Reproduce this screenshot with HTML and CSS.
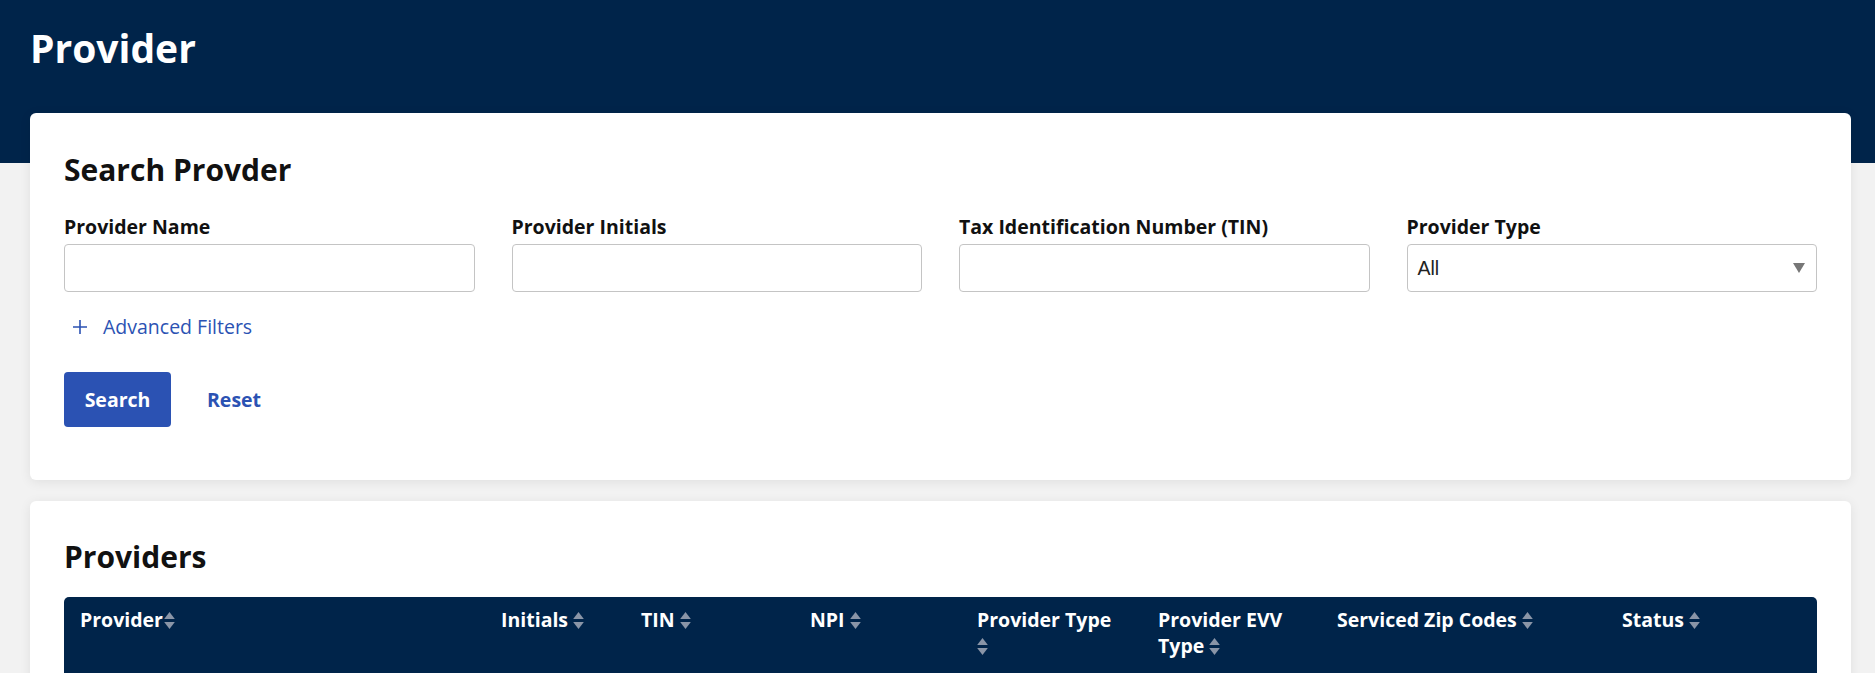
FILE: index.html
```html
<!DOCTYPE html>
<html lang="en">
<head>
<meta charset="utf-8">
<title>Provider</title>
<link rel="stylesheet" href="styles.css">
</head>
<body>
<header class="banner">
  <h1 class="page-title">Provider</h1>
</header>
<main class="content">
  <section class="card search-card">
    <h2 class="card-title">Search Provder</h2>
    <div class="filters">
      <div class="field">
        <label class="field-label" for="pname">Provider Name</label>
        <input class="text-input" id="pname" type="text">
      </div>
      <div class="field">
        <label class="field-label" for="pinit">Provider Initials</label>
        <input class="text-input" id="pinit" type="text">
      </div>
      <div class="field">
        <label class="field-label" for="ptin">Tax Identification Number (TIN)</label>
        <input class="text-input" id="ptin" type="text">
      </div>
      <div class="field">
        <label class="field-label" for="ptype">Provider Type</label>
        <div class="select">
          <span class="select-value">All</span>
          <svg class="select-arrow" viewBox="0 0 12 10" width="12" height="10" aria-hidden="true"><polygon points="0,0 12,0 6,10" fill="#777"/></svg>
        </div>
      </div>
    </div>
    <a class="adv-link" href="#">
      <svg class="plus" viewBox="0 0 16 16" width="16" height="16" aria-hidden="true"><path d="M8 1v14M1 8h14" stroke="#2b52b3" stroke-width="1.6" fill="none"/></svg>
      <span>Advanced Filters</span>
    </a>
    <div class="actions">
      <button class="btn-primary" type="button">Search</button>
      <button class="btn-link" type="button">Reset</button>
    </div>
  </section>

  <section class="card results-card">
    <h2 class="card-title">Providers</h2>
    <table class="grid">
      <colgroup>
        <col class="c-provider"><col class="c-initials"><col class="c-tin"><col class="c-npi"><col class="c-type"><col class="c-evv"><col class="c-zip"><col class="c-status">
      </colgroup>
      <thead>
        <tr>
          <th>Provider<svg class="sort tight" viewBox="0 0 10 16" aria-hidden="true"><polygon points="5,0 10,6.5 0,6.5"/><polygon points="0,9.5 10,9.5 5,16"/></svg></th>
          <th>Initials <svg class="sort" viewBox="0 0 10 16" aria-hidden="true"><polygon points="5,0 10,6.5 0,6.5"/><polygon points="0,9.5 10,9.5 5,16"/></svg></th>
          <th>TIN <svg class="sort" viewBox="0 0 10 16" aria-hidden="true"><polygon points="5,0 10,6.5 0,6.5"/><polygon points="0,9.5 10,9.5 5,16"/></svg></th>
          <th>NPI <svg class="sort" viewBox="0 0 10 16" aria-hidden="true"><polygon points="5,0 10,6.5 0,6.5"/><polygon points="0,9.5 10,9.5 5,16"/></svg></th>
          <th>Provider Type <svg class="sort" viewBox="0 0 10 16" aria-hidden="true"><polygon points="5,0 10,6.5 0,6.5"/><polygon points="0,9.5 10,9.5 5,16"/></svg></th>
          <th>Provider EVV Type <svg class="sort" viewBox="0 0 10 16" aria-hidden="true"><polygon points="5,0 10,6.5 0,6.5"/><polygon points="0,9.5 10,9.5 5,16"/></svg></th>
          <th>Serviced Zip Codes <svg class="sort" viewBox="0 0 10 16" aria-hidden="true"><polygon points="5,0 10,6.5 0,6.5"/><polygon points="0,9.5 10,9.5 5,16"/></svg></th>
          <th>Status <svg class="sort" viewBox="0 0 10 16" aria-hidden="true"><polygon points="5,0 10,6.5 0,6.5"/><polygon points="0,9.5 10,9.5 5,16"/></svg></th>
        </tr>
      </thead>
    </table>
  </section>
</main>
</body>
</html>
```

FILE: styles.css
```css
* { box-sizing: border-box; }

html, body {
  margin: 0;
  padding: 0;
}

body {
  background: #f2f2f2;
  font-family: "Open Sans", "Noto Sans", "Liberation Sans", sans-serif;
  color: #111;
  overflow: hidden;
}

.banner {
  background: #00244a;
  height: 163px;
  padding: 24px 30px 0;
}

.page-title {
  margin: 0;
  color: #fff;
  font-size: 39px;
  line-height: 48px;
  font-weight: 700;
}

.content {
  margin: -50px 24px 0 30px;
  display: flex;
  flex-direction: column;
  gap: 21px;
}

.card {
  background: #fff;
  border-radius: 6px;
  box-shadow: 0 2px 12px rgba(0, 0, 0, 0.08);
  padding: 37px 34px 0;
}

.search-card {
  height: 367px;
}

.card-title {
  margin: 0;
  font-size: 30px;
  line-height: 40px;
  font-weight: 700;
  color: #111;
}

.filters {
  display: grid;
  grid-template-columns: repeat(4, 1fr);
  column-gap: 37px;
  margin-top: 23px;
}

.field {
  display: flex;
  flex-direction: column;
}

.field-label {
  font-size: 19.5px;
  line-height: 27px;
  font-weight: 700;
  color: #111;
  margin-bottom: 4px;
}

.text-input,
.select {
  height: 48px;
  border: 1px solid #c4c4c4;
  border-radius: 4px;
  background: #fff;
  font: inherit;
  width: 100%;
}

.select {
  display: flex;
  align-items: center;
  justify-content: space-between;
  padding: 0 11px 0 10px;
}

.select-value {
  font-family: "Liberation Sans", Arial, sans-serif;
  font-size: 19.5px;
  color: #222;
}

.adv-link {
  display: inline-flex;
  align-items: center;
  gap: 15px;
  margin-top: 21px;
  margin-left: 8px;
  color: #2b52b3;
  text-decoration: none;
  font-size: 19.5px;
  line-height: 27px;
}

.actions {
  display: flex;
  align-items: center;
  gap: 36px;
  margin-top: 32px;
}

.btn-primary {
  background: #2b52b3;
  color: #fff;
  border: none;
  border-radius: 4px;
  height: 55px;
  width: 107px;
  font: inherit;
  font-size: 19.5px;
  font-weight: 700;
  padding: 0;
}

.btn-link {
  background: none;
  border: none;
  padding: 0;
  color: #2b52b3;
  font: inherit;
  font-size: 19.5px;
  font-weight: 700;
}

.results-card {
  padding-top: 36px;
  height: 300px;
}

.grid {
  width: 100%;
  border-collapse: collapse;
  table-layout: fixed;
  margin-top: 20px;
}

.c-provider { width: 421px; }
.c-initials { width: 140px; }
.c-tin { width: 169px; }
.c-npi { width: 167px; }
.c-type { width: 181px; }
.c-evv { width: 179px; }
.c-zip { width: 285px; }
.c-status { width: 211px; }

.grid thead tr {
  background: #00244a;
}

.grid th {
  color: #fff;
  text-align: left;
  vertical-align: top;
  font-size: 19.5px;
  line-height: 26px;
  font-weight: 700;
  padding: 10px 24px 30px 16px;
}

.grid th:first-child { border-top-left-radius: 5px; }
.grid th:last-child { border-top-right-radius: 5px; }

.sort {
  width: 11px;
  height: 17px;
  fill: #8a95a7;
  vertical-align: -2px;
}

.sort.tight { margin-left: 1px; }
```
